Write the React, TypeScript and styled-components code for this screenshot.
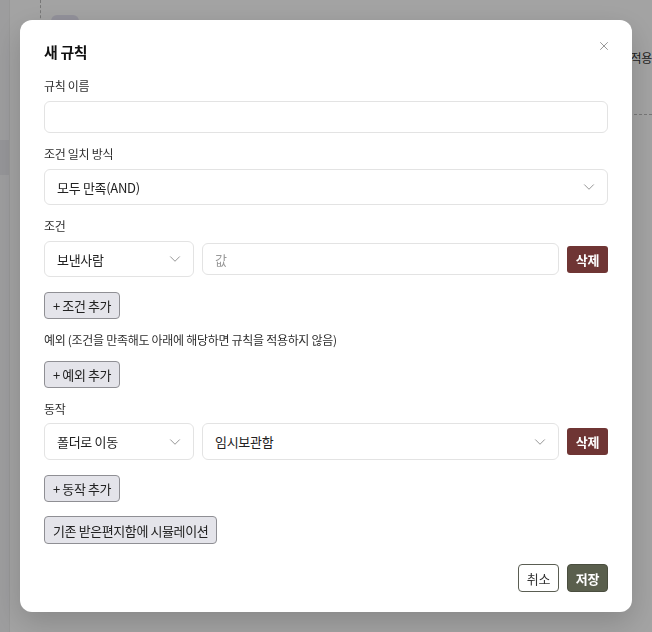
import React from "react";
import styled, { createGlobalStyle } from "styled-components";
import { ChevronDown, X } from "lucide-react";

const Global = createGlobalStyle`
  * { box-sizing: border-box; }
  html, body { margin: 0; padding: 0; }
  body {
    font-family: "Noto Sans CJK KR", "Noto Sans", "Liberation Sans", sans-serif;
    background: #fff;
    width: 652px;
    height: 632px;
    overflow: hidden;
  }
`;

const Page = styled.div`
  display: flex;
  width: 652px;
  height: 632px;
  background: #fff;
`;

const SideStrip = styled.div`
  width: 10px;
  background: #f6f6f8;
  border-right: 1px solid #eee;
  display: flex;
  flex-direction: column;
  padding-top: 140px;
`;

const SideBlock = styled.div`
  height: 35px;
  background: #e9e9ee;
`;

const Main = styled.div`
  flex: 1;
  padding-left: 30px;
  display: flex;
  flex-direction: column;
`;

const DashedBox = styled.div`
  border-left: 1px dashed #bbb;
  height: 115px;
  padding: 15px 0 0 10px;
  display: flex;
  justify-content: space-between;
  border-bottom: 1px dashed #bbb;
`;

const Pill = styled.div`
  width: 28px;
  height: 22px;
  border-radius: 6px;
  background: #e6e4f2;
`;

const BgText = styled.div`
  font-size: 12px;
  letter-spacing: -0.3px;
  color: #333;
  margin-top: 34px;
  margin-right: 0;
`;

const Overlay = styled.div`
  position: fixed;
  inset: 0;
  background: rgba(0, 0, 0, 0.36);
  display: flex;
  align-items: center;
  justify-content: center;
`;

const Modal = styled.div`
  position: relative;
  width: 612px;
  height: 592px;
  background: #fff;
  border-radius: 12px;
  box-shadow: 0 10px 30px rgba(0, 0, 0, 0.18);
  padding: 22px 24px 20px;
  display: flex;
  flex-direction: column;
  & > * { flex-shrink: 0; }
`;

const CloseBtn = styled.button`
  position: absolute;
  top: 18px;
  right: 20px;
  width: 16px;
  height: 16px;
  padding: 0;
  border: none;
  background: none;
  color: #8a8a8a;
  display: flex;
  align-items: center;
  justify-content: center;
`;

const Title = styled.h2`
  margin: 0 0 15px;
  font-size: 15px;
  line-height: 20px;
  font-weight: 700;
  letter-spacing: -0.4px;
  color: #111;
`;

const Section = styled.div<{ $mb?: number }>`
  display: flex;
  flex-direction: column;
  margin-bottom: ${(p) => p.$mb ?? 12}px;
`;

const Label = styled.div<{ $mb?: number }>`
  font-size: 12px;
  line-height: 18px;
  letter-spacing: -0.3px;
  color: #2e2e2e;
  margin-bottom: ${(p) => p.$mb ?? 6}px;
`;

const TextInput = styled.div<{ $h?: number; $grow?: boolean }>`
  height: ${(p) => p.$h ?? 32}px;
  ${(p) => (p.$grow ? "flex: 1; min-width: 0;" : "")}
  border: 1px solid #e3e3e3;
  border-radius: 6px;
  padding: 0 12px;
  display: flex;
  align-items: center;
  font-size: 13px;
  letter-spacing: -0.3px;
  color: #999;
`;

const SelectBox = styled.div<{ $w?: number; $h?: number; $grow?: boolean }>`
  height: ${(p) => p.$h ?? 36}px;
  ${(p) => (p.$w ? `width: ${p.$w}px; flex: none;` : "")}
  ${(p) => (p.$grow ? "flex: 1; min-width: 0;" : "")}
  border: 1px solid #e3e3e3;
  border-radius: 6px;
  padding: 0 9px 0 12px;
  display: flex;
  align-items: center;
  justify-content: space-between;
  font-size: 13px;
  letter-spacing: -0.3px;
  color: #222;
  background: #fff;
  svg { color: #8a8a8a; }
`;

const Row = styled.div<{ $mb?: number }>`
  display: flex;
  align-items: center;
  gap: 8px;
  margin-bottom: ${(p) => p.$mb ?? 0}px;
`;

const DangerBtn = styled.button`
  height: 27px;
  width: 41px;
  flex: none;
  border: none;
  border-radius: 3px;
  background: #6f3534;
  color: #fff;
  font-family: inherit;
  font-size: 13px;
  font-weight: 700;
  letter-spacing: -0.3px;
  padding: 0;
`;

const GhostBtn = styled.button<{ $h?: number }>`
  align-self: flex-start;
  height: ${(p) => p.$h ?? 27}px;
  padding: 0 8px;
  border: 1px solid #8f8f94;
  border-radius: 4px;
  background: #e4e4ea;
  color: #222;
  font-family: inherit;
  font-size: 13px;
  letter-spacing: -0.4px;
`;

const Footer = styled.div`
  margin-top: auto;
  display: flex;
  justify-content: flex-end;
  gap: 8px;
`;

const CancelBtn = styled.button`
  height: 28px;
  width: 41px;
  padding: 0;
  border: 1px solid #5a5d52;
  border-radius: 4px;
  background: #fff;
  color: #333;
  font-family: inherit;
  font-size: 13px;
  letter-spacing: -0.3px;
`;

const SaveBtn = styled.button`
  height: 28px;
  width: 41px;
  padding: 0;
  border: 1px solid #4a4e3f;
  border-radius: 4px;
  background: #5a5f4d;
  color: #fff;
  font-family: inherit;
  font-size: 13px;
  font-weight: 700;
  letter-spacing: -0.3px;
`;

const Chevron = () => <ChevronDown size={18} strokeWidth={1.2} />;

export default function App() {
  return (
    <>
      <Global />
      <Page>
        <SideStrip>
          <SideBlock />
        </SideStrip>
        <Main>
          <DashedBox>
            <Pill />
            <BgText>적용</BgText>
          </DashedBox>
        </Main>
      </Page>
      <Overlay>
        <Modal>
          <CloseBtn aria-label="닫기">
            <X size={14} strokeWidth={1.5} />
          </CloseBtn>
          <Title>새 규칙</Title>

          <Section>
            <Label>규칙 이름</Label>
            <TextInput />
          </Section>

          <Section>
            <Label>조건 일치 방식</Label>
            <SelectBox>
              <span>모두 만족(AND)</span>
              <Chevron />
            </SelectBox>
          </Section>

          <Section>
            <Label>조건</Label>
            <Row $mb={15}>
              <SelectBox $w={150}>
                <span>보낸사람</span>
                <Chevron />
              </SelectBox>
              <TextInput $grow>값</TextInput>
              <DangerBtn>삭제</DangerBtn>
            </Row>
            <GhostBtn>+ 조건 추가</GhostBtn>
          </Section>

          <Section>
            <Label $mb={12}>예외 (조건을 만족해도 아래에 해당하면 규칙을 적용하지 않음)</Label>
            <GhostBtn>+ 예외 추가</GhostBtn>
          </Section>

          <Section $mb={14}>
            <Label $mb={5}>동작</Label>
            <Row $mb={15}>
              <SelectBox $w={150} $h={37}>
                <span>폴더로 이동</span>
                <Chevron />
              </SelectBox>
              <SelectBox $grow $h={37}>
                <span>임시보관함</span>
                <Chevron />
              </SelectBox>
              <DangerBtn>삭제</DangerBtn>
            </Row>
            <GhostBtn>+ 동작 추가</GhostBtn>
          </Section>

          <GhostBtn $h={28}>기존 받은편지함에 시뮬레이션</GhostBtn>

          <Footer>
            <CancelBtn>취소</CancelBtn>
            <SaveBtn>저장</SaveBtn>
          </Footer>
        </Modal>
      </Overlay>
    </>
  );
}
